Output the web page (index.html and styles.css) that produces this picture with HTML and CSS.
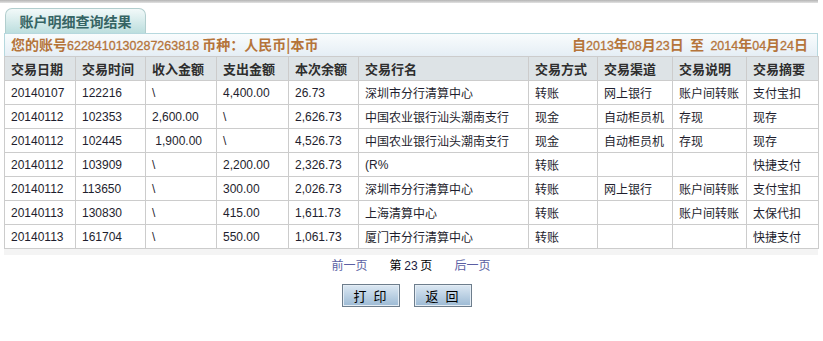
FILE: index.html
```html
<!DOCTYPE html>
<html lang="zh-CN">
<head>
<meta charset="utf-8">
<title>账户明细查询结果</title>
<link rel="stylesheet" href="styles.css">
</head>
<body>
<div class="top-rule"></div>
<div class="page">
  <div class="tab">账户明细查询结果</div>
  <div class="info-bar">
    <div class="info-left">您的账号<span class="num">6228410130287263818</span> 币种：人民币|本币</div>
    <div class="info-right">自<span class="num">2013</span>年<span class="num">08</span>月<span class="num">23</span>日&nbsp;&nbsp;至&nbsp;&nbsp;<span class="num">2014</span>年<span class="num">04</span>月<span class="num">24</span>日</div>
  </div>
  <table class="detail">
    <colgroup>
      <col class="c1"><col class="c2"><col class="c3"><col class="c4"><col class="c5">
      <col class="c6"><col class="c7"><col class="c8"><col class="c9"><col class="c10">
    </colgroup>
    <thead>
      <tr><th>交易日期</th><th>交易时间</th><th>收入金额</th><th>支出金额</th><th>本次余额</th><th>交易行名</th><th>交易方式</th><th>交易渠道</th><th>交易说明</th><th>交易摘要</th></tr>
    </thead>
    <tbody>
      <tr><td>20140107</td><td>122216</td><td>\</td><td>4,400.00</td><td>26.73</td><td>深圳市分行清算中心</td><td>转账</td><td>网上银行</td><td>账户间转账</td><td>支付宝扣</td></tr>
      <tr><td>20140112</td><td>102353</td><td>2,600.00</td><td>\</td><td>2,626.73</td><td>中国农业银行汕头潮南支行</td><td>现金</td><td>自动柜员机</td><td>存现</td><td>现存</td></tr>
      <tr><td>20140112</td><td>102445</td><td>&nbsp;1,900.00</td><td>\</td><td>4,526.73</td><td>中国农业银行汕头潮南支行</td><td>现金</td><td>自动柜员机</td><td>存现</td><td>现存</td></tr>
      <tr><td>20140112</td><td>103909</td><td>\</td><td>2,200.00</td><td>2,326.73</td><td>(R%</td><td>转账</td><td></td><td></td><td>快捷支付</td></tr>
      <tr><td>20140112</td><td>113650</td><td>\</td><td>300.00</td><td>2,026.73</td><td>深圳市分行清算中心</td><td>转账</td><td>网上银行</td><td>账户间转账</td><td>支付宝扣</td></tr>
      <tr><td>20140113</td><td>130830</td><td>\</td><td>415.00</td><td>1,611.73</td><td>上海清算中心</td><td>转账</td><td></td><td>账户间转账</td><td>太保代扣</td></tr>
      <tr><td>20140113</td><td>161704</td><td>\</td><td>550.00</td><td>1,061.73</td><td>厦门市分行清算中心</td><td>转账</td><td></td><td></td><td>快捷支付</td></tr>
    </tbody>
  </table>
  <div class="under-band"></div>
  <div class="pager">
    <a class="pager-link">前一页</a>
    <span class="pager-cur">第 <span class="num">23</span> 页</span>
    <a class="pager-link">后一页</a>
  </div>
  <div class="buttons">
    <button class="btn">打 印</button>
    <button class="btn">返 回</button>
  </div>
</div>
</body>
</html>
```
FILE: styles.css
```css
html, body {
  margin: 0;
  padding: 0;
  background: #ffffff;
}
body {
  font-family: "Liberation Sans", "Noto Sans CJK SC", sans-serif;
  font-size: 12px;
  color: #222;
}
.top-rule {
  height: 3px;
  margin-right: 5px;
  background: linear-gradient(#b4b4b4, #e2e2e2);
}
.page {
  padding: 5px 5px 0 4px;
}
.tab {
  width: 139px;
  height: 24px;
  margin-left: 1px;
  border: 1px solid #b2cece;
  border-bottom: none;
  border-radius: 7px 7px 0 0;
  background: linear-gradient(#f2f9f9, #bcdede);
  color: #356464;
  font-family: "Noto Sans CJK SC", sans-serif;
  font-size: 14px;
  font-weight: bold;
  line-height: 25px;
  text-align: center;
}
.info-bar {
  display: flex;
  justify-content: space-between;
  align-items: center;
  height: 22px;
  padding: 0 9px 0 6px;
  border: 1px solid #b6d8de;
  border-bottom: none;
  background: linear-gradient(#f9fcfd, #e5eef5);
  color: #b5743a;
  font-family: "Noto Sans CJK SC", sans-serif;
  font-size: 14px;
  font-weight: bold;
  line-height: 22px;
}
.info-bar .num {
  font-family: "Liberation Sans", sans-serif;
  font-size: 12.5px;
  font-weight: normal;
  -webkit-text-stroke: 0.3px #b5743a;
}
.detail {
  width: 814px;
  table-layout: fixed;
  border-collapse: collapse;
  border: 1px solid #cccccc;
}
.c1 { width: 71px; }
.c2 { width: 70px; }
.c3 { width: 71px; }
.c4 { width: 72px; }
.c5 { width: 70px; }
.c6 { width: 170px; }
.c7 { width: 69px; }
.c8 { width: 75px; }
.c9 { width: 74px; }
.c10 { width: 72px; }
.detail th,
.detail td {
  border: 1px solid #cccccc;
  padding: 0 0 0 6px;
  text-align: left;
  white-space: nowrap;
  overflow: hidden;
}
.detail th {
  height: 23px;
  background: #dde3e6;
  color: #2e2e2e;
  font-family: "Noto Sans CJK SC", sans-serif;
  font-size: 13px;
  font-weight: bold;
}
.detail td {
  height: 23px;
  font-family: "Liberation Sans", "Noto Sans CJK SC", sans-serif;
  font-size: 12px;
  color: #1e1e2e;
}
.under-band {
  width: 814px;
  height: 6px;
  background: #f4f4f4;
}
.pager {
  display: flex;
  justify-content: center;
  gap: 22px;
  margin-top: 2px;
  height: 16px;
  line-height: 16px;
  font-family: "Noto Sans CJK SC", sans-serif;
  font-size: 12px;
}
.pager-link {
  color: #5b5fa3;
  cursor: pointer;
}
.pager-cur {
  color: #000;
}
.pager-cur .num {
  font-family: "Liberation Sans", sans-serif;
  color: #1a1a40;
}
.buttons {
  display: flex;
  justify-content: center;
  gap: 14px;
  margin-top: 11px;
  padding-right: 8px;
}
.btn {
  width: 58px;
  height: 23px;
  padding: 0;
  border: 1px solid #6d7d8c;
  box-shadow: inset 0 0 0 1px #e4edf5;
  background: linear-gradient(#dce8f3, #9cbad4);
  color: #000;
  font-family: "Noto Sans CJK SC", sans-serif;
  font-size: 13px;
  letter-spacing: 2px;
  cursor: pointer;
}
```
